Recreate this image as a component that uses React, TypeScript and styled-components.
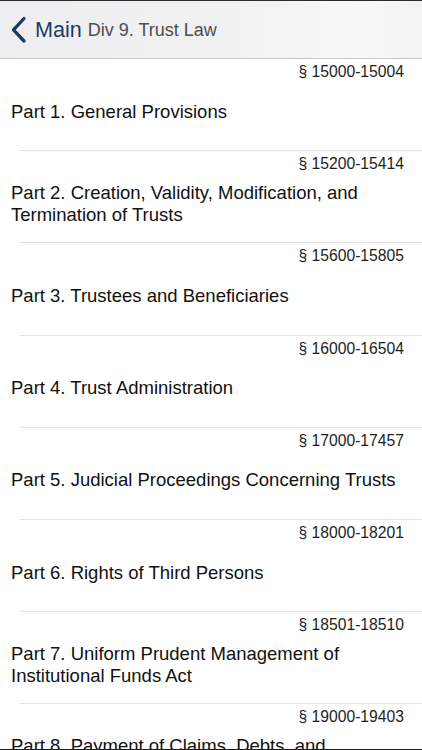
import React from "react";
import styled, { createGlobalStyle } from "styled-components";

const Global = createGlobalStyle`
  html, body { margin: 0; padding: 0; background: #ffffff; }
  body { font-family: "Liberation Sans", Arial, Helvetica, sans-serif; -webkit-font-smoothing: antialiased; }
`;

const Screen = styled.div`
  width: 422px;
  height: 750px;
  overflow: hidden;
  background: #ffffff;
  display: flex;
  flex-direction: column;
  box-sizing: border-box;
  border-bottom: 1px solid #1a1a1a;
`;

const NavBar = styled.header`
  flex: 0 0 auto;
  height: 59px;
  box-sizing: border-box;
  border-top: 1px solid #2a2a2a;
  border-bottom: 1px solid #c9c9cb;
  background: linear-gradient(to right, #eeeef0 0%, #f1f1f2 55%, #f8f8f8 85%, #f3f3f3 100%);
  display: flex;
  align-items: center;
  padding-left: 11px;
  gap: 6px;
`;

const BackButton = styled.div`
  display: flex;
  align-items: center;
  gap: 8px;
  color: #1d3a66;
`;

const BackText = styled.span`
  font-size: 21.6px;
  line-height: 26px;
  color: #1d3a66;
`;

const NavTitle = styled.span`
  font-size: 18px;
  line-height: 24px;
  color: #4d4d4f;
  margin-top: 1px;
`;

const List = styled.div`
  flex: 0 0 auto;
  display: flex;
  flex-direction: column;
`;

const Row = styled.div`
  flex: 0 0 auto;
  height: 91.2px;
  box-sizing: border-box;
  display: flex;
  flex-direction: column;
  padding: 3px 8px 9px 11px;
`;

const Range = styled.div`
  height: 20px;
  line-height: 20px;
  font-size: 15.7px;
  color: #1e1e1e;
  text-align: right;
  padding-right: 10px;
  flex: 0 0 auto;
`;

const TitleArea = styled.div`
  flex: 1;
  display: flex;
  align-items: center;
`;

const Title = styled.div`
  font-size: 18.5px;
  line-height: 22px;
  color: #111111;
  padding-right: 10px;
`;

const Separator = styled.div`
  flex: 0 0 auto;
  height: 1px;
  margin-left: 20px;
  background: #e3e3e6;
`;

const items = [
  { range: "§ 15000-15004", title: "Part 1. General Provisions" },
  {
    range: "§ 15200-15414",
    title: "Part 2. Creation, Validity, Modification, and Termination of Trusts",
  },
  { range: "§ 15600-15805", title: "Part 3. Trustees and Beneficiaries" },
  { range: "§ 16000-16504", title: "Part 4. Trust Administration" },
  { range: "§ 17000-17457", title: "Part 5. Judicial Proceedings Concerning Trusts" },
  { range: "§ 18000-18201", title: "Part 6. Rights of Third Persons" },
  {
    range: "§ 18501-18510",
    title: "Part 7. Uniform Prudent Management of Institutional Funds Act",
  },
  {
    range: "§ 19000-19403",
    title: "Part 8. Payment of Claims, Debts, and Expenses from Revocable Trusts",
  },
];

const Chevron = () => (
  <svg width="16" height="28" viewBox="0 0 16 28" aria-hidden="true">
    <path
      d="M13 2.5 L2.5 13.8 L13 25"
      fill="none"
      stroke="#1d3a66"
      strokeWidth="3.3"
      strokeLinecap="round"
      strokeLinejoin="round"
    />
  </svg>
);

export default function App() {
  return (
    <>
      <Global />
      <Screen>
        <NavBar>
          <BackButton>
            <Chevron />
            <BackText>Main</BackText>
          </BackButton>
          <NavTitle>Div 9. Trust Law</NavTitle>
        </NavBar>
        <List>
          {items.map((it, i) => (
            <React.Fragment key={it.range}>
              {i > 0 && <Separator />}
              <Row>
                <Range>{it.range}</Range>
                <TitleArea>
                  <Title>{it.title}</Title>
                </TitleArea>
              </Row>
            </React.Fragment>
          ))}
        </List>
      </Screen>
    </>
  );
}
